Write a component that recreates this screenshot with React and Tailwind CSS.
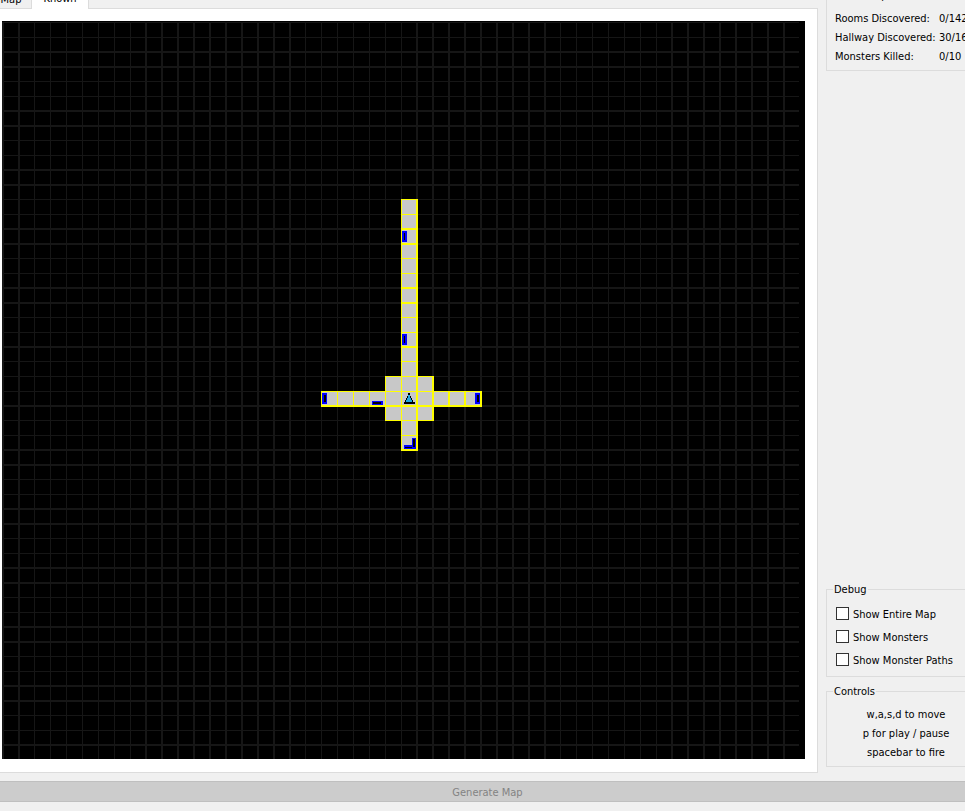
const CELL_W = 15.94;
const CELL_H = 14.74;
const COUNT = 50;

// Grid line spans, snapped to whole pixels inside the canvas.
const colLine = (k) => {
  const at = k * CELL_W;
  const start = Math.round(at);
  return { start, size: Math.round(at + 1.58) - start };
};
const rowLine = (k) => {
  const at = 1 + k * CELL_H;
  const start = Math.round(at);
  return { start, size: Math.round(at + 1.46) - start };
};

const lines = Array.from({ length: COUNT }, (_, k) => k);

// Explored cells as [column, row].
const cells = [];
for (let r = 12; r <= 28; r++) cells.push([25, r]);
for (let c = 20; c <= 29; c++) if (c !== 25) cells.push([c, 25]);
[24, 26].forEach((c) => [24, 26].forEach((r) => cells.push([c, r])));

// Doors: blue frame [x, y, w, h] with the black slot inside it.
const doors = [
  { frame: [400, 210, 5, 11], slot: [402, 212, 1, 7] },
  { frame: [400, 313, 5, 11], slot: [402, 315, 1, 7] },
  { frame: [320, 372, 5, 11], slot: [322, 374, 2, 7] },
  { frame: [370, 380, 11, 4], slot: [371, 381, 8, 2] },
  { frame: [473, 372, 5, 11], slot: [475, 374, 2, 7] },
  { frame: [402, 424, 11, 4], slot: [403, 426, 7, 1] },
  { frame: [410, 417, 4, 11], slot: [411, 418, 2, 8] },
];

function Box({ area, fill }) {
  const [x, y, width, height] = area;
  return <rect x={x} y={y} width={width} height={height} fill={fill} />;
}

function Cell({ col, row }) {
  const l = colLine(col);
  const r = colLine(col + 1);
  const t = rowLine(row);
  const b = rowLine(row + 1);
  const right = r.start + r.size;
  const bottom = b.start + b.size;
  return (
    <g>
      <Box area={[l.start, t.start, right - l.start, t.size]} fill="#ffff00" />
      <Box area={[l.start, b.start, right - l.start, b.size]} fill="#ffff00" />
      <Box area={[l.start, t.start, l.size, bottom - t.start]} fill="#ffff00" />
      <Box area={[r.start, t.start, r.size, bottom - t.start]} fill="#ffff00" />
    </g>
  );
}

function DungeonMap() {
  return (
    <svg
      viewBox="0 0 803 738"
      className="block w-full bg-black"
      shapeRendering="crispEdges"
      role="img"
      aria-label="Known map"
    >
      {lines.map((k) => {
        const c = colLine(k);
        return <Box key={k} area={[c.start, 1, c.size, 737]} fill="#161616" />;
      })}
      {lines.map((k) => {
        const r = rowLine(k);
        return <Box key={k} area={[0, r.start, 797, r.size]} fill="#161616" />;
      })}
      {cells.map(([c, r]) => (
        <Box
          key={`${c}-${r}`}
          area={[
            colLine(c).start,
            rowLine(r).start,
            colLine(c + 1).start - colLine(c).start,
            rowLine(r + 1).start - rowLine(r).start,
          ]}
          fill="#c8c8c8"
        />
      ))}
      {cells.map(([c, r]) => (
        <Cell key={`${c}-${r}`} col={c} row={r} />
      ))}
      {doors.map((d, i) => (
        <Box key={i} area={d.frame} fill="#0000ff" />
      ))}
      {doors.map((d, i) => (
        <Box key={i} area={d.slot} fill="#000000" />
      ))}
      {/* Player marker */}
      <path
        d="M406 372h2v3h1v2h1v2h1v2h2v2h-11v-2h1v-2h1v-2h1v-2h1z"
        fill="#000000"
      />
      <path d="M406 374h2v3h1v2h1v2h-6v-2h1v-2h1z" fill="#1ea5e0" />
    </svg>
  );
}

function Group({ title, className, children }) {
  return (
    <fieldset className="border border-[#dcdcdc]">
      <legend className="ml-[6px] h-[14px] px-px leading-[16px]">{title}</legend>
      <div className={className}>{children}</div>
    </fieldset>
  );
}

const stats = [
  ["Rooms Discovered:", "0/142"],
  ["Hallway Discovered:", "30/168"],
  ["Monsters Killed:", "0/10"],
];

const toggles = [
  ["show-map", "Show Entire Map"],
  ["show-monsters", "Show Monsters"],
  ["show-paths", "Show Monster Paths"],
];

export default function App() {
  return (
    <div className="min-h-screen overflow-hidden bg-[#f0f0f0] font-['DejaVu_Sans_Condensed','DejaVu_Sans',sans-serif] text-[11px] text-black">
      <div className="-mt-3 -mr-[21px] -ml-[11px] pb-2">
        <div className="flex gap-2">
          <main className="flex min-w-0 flex-1 flex-col">
            <div role="tablist" className="flex h-5 items-end pl-[2px]">
              <button
                role="tab"
                aria-selected="false"
                className="h-[17px] w-[41px] border-r border-[#dcdcdc] leading-[17px]"
              >
                Map
              </button>
              <button
                role="tab"
                aria-selected="true"
                className="z-10 -mb-px h-[21px] w-[57px] border-r border-[#dcdcdc] bg-white leading-[21px]"
              >
                Known
              </button>
            </div>
            <div role="tabpanel" className="border border-[#dcdcdc] bg-white p-3 pb-[13px]">
              <DungeonMap />
            </div>
          </main>

          <aside className="flex w-40 shrink-0 flex-col justify-between pb-[6px]">
            <Group title="Game Map" className="pt-[7px] pb-1 pl-2">
              <table className="border-collapse text-left leading-[19px] whitespace-nowrap">
                <tbody>
                  {stats.map(([label, value]) => (
                    <tr key={label}>
                      <th scope="row" className="w-[104px] min-w-[104px] p-0 font-normal">
                        {label}
                      </th>
                      <td className="p-0">{value}</td>
                    </tr>
                  ))}
                </tbody>
              </table>
            </Group>

            <div className="flex flex-col gap-[7px]">
              <Group title="Debug" className="pt-2 pb-[3px] pl-[9px]">
                {toggles.map(([id, label]) => (
                  <div key={id} className="flex h-[23px] items-start gap-1">
                    <input
                      id={id}
                      type="checkbox"
                      className="mt-[3px] size-[13px] appearance-none border border-[#333333] bg-white checked:bg-[#333333]"
                    />
                    <label htmlFor={id} className="leading-[21px]">
                      {label}
                    </label>
                  </div>
                ))}
              </Group>

              <Group title="Controls" className="pt-[7px] pb-1 text-center leading-[19px]">
                <p>w,a,s,d to move</p>
                <p>p for play / pause</p>
                <p>spacebar to fire</p>
              </Group>
            </div>
          </aside>
        </div>

        <button
          disabled
          className="mt-2 block h-[21px] w-full border border-[#bfbfbf] bg-[#cccccc] pt-px leading-[19px] text-[#838383]"
        >
          Generate Map
        </button>
      </div>
    </div>
  );
}
